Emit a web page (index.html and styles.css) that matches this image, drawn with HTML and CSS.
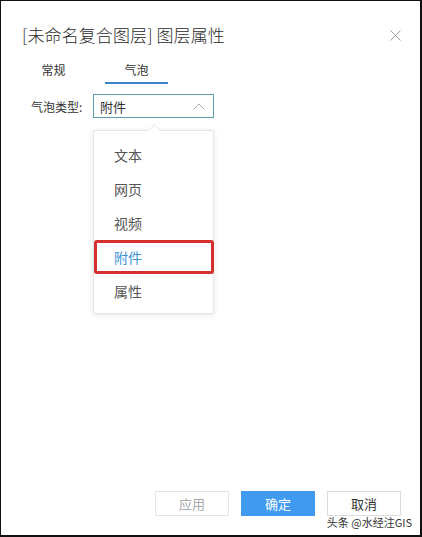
FILE: index.html
```html
<!DOCTYPE html>
<html lang="zh">
<head>
<meta charset="utf-8">
<link rel="stylesheet" href="styles.css">
</head>
<body>
<div class="dialog">
  <div class="header">
    <div class="title">[未命名复合图层] 图层属性</div>
    <svg class="close" width="11" height="11" viewBox="0 0 11 11"><path d="M0.5 0.5L10.5 10.5M10.5 0.5L0.5 10.5" stroke="#9a9a9a" stroke-width="1" fill="none"/></svg>
  </div>
  <div class="tabs">
    <div class="tab">常规</div>
    <div class="tab active">气泡</div>
  </div>
  <div class="row">
    <div class="label">气泡类型:</div>
    <div class="select">
      <span>附件</span>
      <svg width="12" height="7" viewBox="0 0 12 7"><path d="M0.5 6.5L6 1L11.5 6.5" stroke="#aaa" stroke-width="1" fill="none"/></svg>
      <div class="menu">
        <div class="item">文本</div>
        <div class="item">网页</div>
        <div class="item">视频</div>
        <div class="item selected">附件</div>
        <div class="item">属性</div>
      </div>
    </div>
  </div>
  <div class="footer">
    <div class="btn disabled">应用</div>
    <div class="btn primary">确定</div>
    <div class="btn">取消</div>
  </div>
  <div class="watermark">头条 @水经注GIS</div>
</div>
</body>
</html>
```
FILE: styles.css
```css
html, body {
  margin: 0;
  padding: 0;
  background: #fff;
}
body {
  font-family: "Noto Sans CJK SC", "Microsoft YaHei", sans-serif;
  color: #333;
}
.dialog {
  position: relative;
  box-sizing: border-box;
  width: 422px;
  height: 537px;
  border-left: 1px solid #111;
  border-top: 1px solid #111;
  border-right: 2px solid #111;
  border-bottom: 2px solid #111;
  display: flex;
  flex-direction: column;
}
.header {
  display: flex;
  justify-content: space-between;
  align-items: center;
  padding: 22px 19px 0 21px;
  height: 24px;
}
.title {
  font-size: 17px;
  font-weight: 300;
  line-height: 24px;
  color: #2b2b2b;
  letter-spacing: 0.1px;
}
.close {
  margin-top: 0;
}
.tabs {
  display: flex;
  gap: 20px;
  padding-left: 21px;
  margin-top: 15px;
}
.tab {
  width: 63px;
  text-align: center;
  font-size: 12px;
  line-height: 16px;
  padding-bottom: 4px;
  border-bottom: 2px solid transparent;
  color: #333;
}
.tab.active {
  border-bottom-color: #3a86c4;
}
.row {
  display: flex;
  align-items: center;
  margin-top: 10px;
  padding-left: 30px;
}
.label {
  width: 55px;
  font-size: 12px;
  color: #333;
}
.select {
  position: relative;
  margin-left: 7px;
  box-sizing: border-box;
  width: 121px;
  height: 24px;
  border: 1px solid #5e9cb0;
  display: flex;
  align-items: center;
  justify-content: space-between;
  padding: 0 8px 0 6px;
  font-size: 13px;
  color: #333;
}
.menu {
  position: absolute;
  left: -1px;
  top: 35px;
  width: 121px;
  box-sizing: border-box;
  background: #fff;
  border: 1px solid #e6e6e6;
  box-shadow: 0 1px 5px rgba(0,0,0,0.10);
  padding: 7px 0 5px;
}
.menu::before {
  content: "";
  position: absolute;
  top: -5px;
  left: 56px;
  width: 8px;
  height: 8px;
  background: #fff;
  border-left: 1px solid #ececec;
  border-top: 1px solid #ececec;
  transform: rotate(45deg);
}
.item {
  height: 34px;
  line-height: 34px;
  padding-left: 20px;
  font-size: 14px;
  color: #555;
}
.item.selected {
  color: #3d93d6;
  box-sizing: border-box;
  border: 3px solid #d62f2f;
  border-radius: 3px;
  line-height: 28px;
  padding-left: 17px;
  margin: 0 -1px 0 0;
}
.footer {
  margin-top: auto;
  display: flex;
  justify-content: flex-end;
  gap: 12px;
  padding: 0 19px 19px 0;
}
.btn {
  box-sizing: border-box;
  width: 74px;
  height: 25px;
  line-height: 23px;
  text-align: center;
  font-size: 13px;
  border: 1px solid #dcdcdc;
  color: #333;
  background: #fff;
}
.btn.disabled {
  color: #aaa;
  border-color: #e4e4e4;
}
.btn.primary {
  background: #3f9af0;
  border-color: #3f9af0;
  color: #fff;
}
.watermark {
  position: absolute;
  right: 8px;
  bottom: 6px;
  font-size: 11px;
  color: #333;
  line-height: 14px;
  text-shadow: 0 0 2px #fff, 0 0 2px #fff;
}
```
